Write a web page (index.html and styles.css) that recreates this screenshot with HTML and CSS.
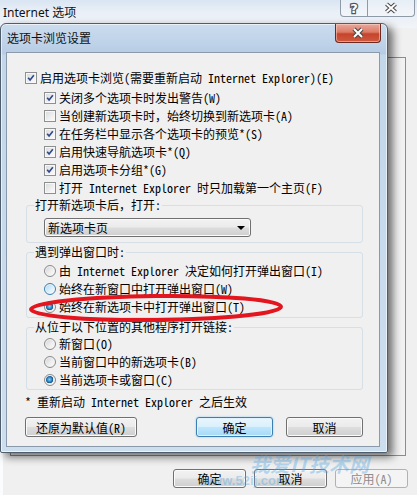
FILE: index.html
```html
<!DOCTYPE html>
<html lang="zh-CN">
<head>
    <meta charset="UTF-8">
    <meta name="viewport" content="width=device-width, initial-scale=1.0">
    <title>选项卡浏览设置</title>
    <link rel="stylesheet" href="styles.css">
</head>
<body>
    <div class="back-window">
        <div class="back-title">
            <span class="back-caption">Internet 选项</span>
            <div class="caption-buttons">
                <span class="cap-btn cap-help">
                    <svg width="14" height="14" viewBox="0 0 14 14"><text x="7" y="12" text-anchor="middle" class="glyph">?</text></svg>
                </span>
                <span class="cap-btn cap-close">
                    <svg width="16" height="12" viewBox="0 0 16 12"><path d="M3.5 2 L12.5 10 M12.5 2 L3.5 10" class="x-out"/><path d="M3.5 2 L12.5 10 M12.5 2 L3.5 10" class="x-in"/></svg>
                </span>
            </div>
        </div>
        <div class="back-panel"></div>
        <div class="back-buttons">
            <button class="btn btn-back">确定</button>
            <button class="btn btn-back">取消</button>
            <button class="btn btn-back" disabled>应用(A)</button>
        </div>
    </div>

    <div class="dialog">
        <div class="dialog-title">
            <span class="dialog-caption">选项卡浏览设置</span>
            <span class="close-btn">
                <svg width="16" height="12" viewBox="0 0 16 12"><path d="M4 2 L12 10 M12 2 L4 10" class="x-out"/><path d="M4 2 L12 10 M12 2 L4 10" class="x-in"/></svg>
            </span>
        </div>
        <div class="client">
            <div class="row"><span class="check"><svg viewBox="0 0 12 12"><path d="M2.6 5.6 L4.9 8.4 L9.4 2.8"/></svg></span>启用选项卡浏览(需要重新启动 Internet Explorer)(E)</div>
            <div class="sub-list">
                <div class="row"><span class="check"><svg viewBox="0 0 12 12"><path d="M2.6 5.6 L4.9 8.4 L9.4 2.8"/></svg></span>关闭多个选项卡时发出警告(W)</div>
                <div class="row"><span class="check"></span>当创建新选项卡时，始终切换到新选项卡(A)</div>
                <div class="row"><span class="check"><svg viewBox="0 0 12 12"><path d="M2.6 5.6 L4.9 8.4 L9.4 2.8"/></svg></span>在任务栏中显示各个选项卡的预览*(S)</div>
                <div class="row"><span class="check"><svg viewBox="0 0 12 12"><path d="M2.6 5.6 L4.9 8.4 L9.4 2.8"/></svg></span>启用快速导航选项卡*(Q)</div>
                <div class="row"><span class="check"><svg viewBox="0 0 12 12"><path d="M2.6 5.6 L4.9 8.4 L9.4 2.8"/></svg></span>启用选项卡分组*(G)</div>
                <div class="row"><span class="check"></span>打开 Internet Explorer 时只加载第一个主页(F)</div>
            </div>

            <fieldset class="group group-first">
                <legend>打开新选项卡后，打开:</legend>
                <div class="select">
                    <span>新选项卡页</span>
                    <span class="arrow"></span>
                </div>
            </fieldset>

            <fieldset class="group">
                <legend>遇到弹出窗口时:</legend>
                <div class="options options-popup">
                    <div class="row"><span class="radio"></span>由 Internet Explorer 决定如何打开弹出窗口(I)</div>
                    <div class="row"><span class="radio hover"></span>始终在新窗口中打开弹出窗口(W)</div>
                    <div class="row"><span class="radio on"></span>始终在新选项卡中打开弹出窗口(T)</div>
                </div>
            </fieldset>

            <fieldset class="group">
                <legend>从位于以下位置的其他程序打开链接:</legend>
                <div class="options">
                    <div class="row"><span class="radio"></span>新窗口(O)</div>
                    <div class="row"><span class="radio"></span>当前窗口中的新选项卡(B)</div>
                    <div class="row"><span class="radio on"></span>当前选项卡或窗口(C)</div>
                </div>
            </fieldset>

            <p class="note">* 重新启动 Internet Explorer 之后生效</p>

            <div class="dialog-buttons">
                <button class="btn btn-wide">还原为默认值(R)</button>
                <button class="btn btn-default">确定</button>
                <button class="btn">取消</button>
            </div>

            <svg class="mark" width="256" height="30" viewBox="0 0 256 30">
                <ellipse cx="128" cy="15" rx="125" ry="12" transform="rotate(-0.6 128 15)"/>
            </svg>
        </div>
    </div>

    <div class="watermark">
        <span class="wm-title">我爱IT技术网</span>
        <span class="wm-url">www.52ij.com</span>
    </div>
</body>
</html>
```

FILE: styles.css
```css
* {
    box-sizing: border-box;
}
body {
    margin: 0;
    width: 417px;
    height: 495px;
    overflow: hidden;
    position: relative;
    background-color: #f0f0f0;
    font-family: "Noto Sans Mono CJK SC", "Noto Sans CJK SC", "Liberation Mono", monospace;
    font-size: 12px;
    color: #000;
}

/* window behind */
.back-window {
    position: absolute;
    top: 0;
    left: 0;
    width: 417px;
    height: 495px;
    background-color: #f0f0f0;
    border-left: 3px solid #fbfcfd;
}
.back-title {
    height: 28px;
    margin-left: -3px;
    display: flex;
    justify-content: space-between;
    align-items: flex-start;
    background: linear-gradient(#d9e5f2 0%, #e9eff6 40%, #f1f4f8 100%);
}
.back-caption {
    font-family: "Noto Sans", "Noto Sans CJK SC", sans-serif;
    font-size: 12px;
    line-height: 16px;
    margin: 5px 0 0 3px;
    color: #111;
}
.caption-buttons {
    display: flex;
    margin-right: 2px;
}
.cap-btn {
    height: 17px;
    display: flex;
    align-items: center;
    justify-content: center;
    border: 1px solid #8e9aa8;
    border-top: none;
    background: rgba(255, 255, 255, 0.35);
}
.cap-help {
    width: 28px;
    border-radius: 0 0 0 4px;
}
.cap-close {
    width: 47px;
    border-left: none;
    border-radius: 0 0 4px 0;
}
.glyph {
    font-family: "DejaVu Sans", sans-serif;
    font-size: 13px;
    font-weight: bold;
    fill: #fff;
    stroke: #555;
    stroke-width: 2.4px;
    paint-order: stroke;
}
.x-out {
    stroke: #4a4a4a;
    stroke-width: 4.2;
    fill: none;
}
.x-in {
    stroke: #fff;
    stroke-width: 2;
    fill: none;
}
.back-panel {
    margin: 29px 0 0 7px;
    width: 396px;
    height: 399px;
    border: 1px solid #898c95;
    background-color: #f2f2f2;
}
.back-buttons {
    display: flex;
    justify-content: flex-end;
    gap: 8px;
    margin-top: 13px;
    padding-right: 9px;
}

/* buttons */
.btn {
    font: inherit;
    width: 77px;
    height: 20px;
    padding: 0;
    color: #000;
    border: 1px solid #707070;
    border-radius: 3px;
    background: linear-gradient(#f2f2f2 0%, #ebebeb 48%, #dddddd 52%, #cfcfcf 100%);
    box-shadow: inset 0 0 0 1px #fafafa;
}
.btn-back {
    width: 73px;
    height: 19px;
}
.btn:disabled {
    color: #8d8d8d;
    border-color: #adb2b5;
    background: #f4f4f4;
    box-shadow: none;
}
.btn-wide {
    width: 112px;
}
.btn-default {
    margin-left: auto;
    border-color: #3c7fb1;
    background: linear-gradient(#eaf6fd 0%, #d9f0fc 48%, #bee6fd 52%, #a7d9f5 100%);
    box-shadow: inset 0 0 0 1px #dff2fd, 0 0 2px #7dc4ef;
}

/* dialog */
.dialog {
    position: absolute;
    left: 0;
    top: 23px;
    width: 388px;
    height: 430px;
    padding: 0 7px 6px 5px;
    border: 1px solid #4f5d6c;
    border-radius: 6px 6px 2px 2px;
    background: linear-gradient(#cbdcee 0px, #b7cde5 30px, #c3d6ea 31px, #cddeef 100%);
    box-shadow: inset 0 0 0 1px rgba(255, 255, 255, 0.6), 5px 4px 8px rgba(0, 0, 0, 0.55);
}
.dialog-title {
    height: 28px;
    display: flex;
    justify-content: space-between;
    align-items: flex-start;
}
.dialog-caption {
    font-family: "Noto Sans CJK SC", sans-serif;
    font-size: 12px;
    line-height: 16px;
    margin: 6px 0 0 1px;
    color: #111;
}
.close-btn {
    width: 46px;
    height: 19px;
    margin-right: -1px;
    display: flex;
    align-items: center;
    justify-content: center;
    border: 1px solid #6e2a21;
    border-top: none;
    border-radius: 0 0 4px 4px;
    background: linear-gradient(#e9a99c 0%, #dc7b66 45%, #c5442c 55%, #cf5a40 100%);
    box-shadow: inset 0 0 0 1px rgba(255, 220, 210, 0.5);
}
.client {
    position: relative;
    height: 395px;
    padding: 16px 16px 0 18px;
    border: 1px solid #8b9aab;
    background-color: #f0f0f0;
}
.row {
    height: 18px;
    display: flex;
    align-items: center;
    gap: 3px;
    white-space: nowrap;
    line-height: 18px;
}
.sub-list {
    margin: 2px 0 0 19px;
}
.check {
    flex: none;
    width: 12px;
    height: 12px;
    border: 1px solid #8e8f8f;
    background: linear-gradient(135deg, #d6d8da 0%, #f0f0f1 60%, #fdfdfd 100%);
    box-shadow: inset 0 0 0 1px #f7f7f7;
}
.check svg {
    display: block;
    width: 10px;
    height: 10px;
}
.check path {
    fill: none;
    stroke: #30488a;
    stroke-width: 2;
}
.radio {
    flex: none;
    width: 12px;
    height: 12px;
    border-radius: 50%;
    border: 1px solid #8a8a8a;
    background: linear-gradient(135deg, #cfd1d3 0%, #eeeeee 55%, #fcfcfc 100%);
    box-shadow: inset 0 0 0 1px #f4f4f4;
}
.radio.hover {
    border-color: #3c7fb1;
    background: linear-gradient(135deg, #a7d8f5 0%, #dff2fd 60%, #f3fbff 100%);
}
.radio.on {
    background: radial-gradient(circle at 45% 45%, #8ad0f6 0%, #2a86c7 30%, #0f4d86 45%, #e8e8e8 50%, #f6f6f6 100%);
}

/* group boxes */
.group {
    margin: 2px 0 0 1px;
    padding: 0 7px;
    min-width: 0;
    border: 1px solid #d5dfe5;
    border-radius: 3px;
}
.group-first {
    margin-top: 1px;
}
.group legend {
    padding: 0 1px;
    height: 14px;
    line-height: 14px;
}
.select {
    margin: 6px 0 5px 10px;
    width: 207px;
    height: 19px;
    display: flex;
    align-items: center;
    justify-content: space-between;
    padding: 0 5px 0 3px;
    border: 1px solid #707070;
    border-radius: 3px;
    background: linear-gradient(#f2f2f2 0%, #ebebeb 48%, #dddddd 52%, #cfcfcf 100%);
    box-shadow: inset 0 0 0 1px #fafafa;
}
.arrow {
    width: 0;
    height: 0;
    border-left: 4px solid transparent;
    border-right: 4px solid transparent;
    border-top: 4px solid #000;
}
.options {
    margin: 1px 0 0 10px;
}
.options-popup {
    margin: 3px 0 1px 10px;
}
.note {
    margin: 5px 0 0;
    line-height: 14px;
}
.dialog-buttons {
    display: flex;
    gap: 13px;
    margin-top: 8px;
}

/* red hand-drawn mark */
.mark {
    position: absolute;
    left: 21px;
    top: 240px;
}
.mark ellipse {
    fill: none;
    stroke: #e3151e;
    stroke-width: 4;
}

/* faint site watermark over the bottom */
.watermark {
    position: absolute;
    left: 200px;
    top: 454px;
    width: 200px;
    height: 40px;
    color: rgba(80, 165, 228, 0.38);
    pointer-events: none;
}
.wm-title {
    position: absolute;
    left: 50px;
    top: 0;
    font-family: "Noto Sans CJK SC", sans-serif;
    font-size: 20px;
    font-weight: bold;
    font-style: italic;
    line-height: 20px;
}
.wm-url {
    position: absolute;
    left: 2px;
    top: 20px;
    font-family: "Liberation Sans", sans-serif;
    font-size: 13px;
    font-weight: bold;
    line-height: 14px;
}
```
